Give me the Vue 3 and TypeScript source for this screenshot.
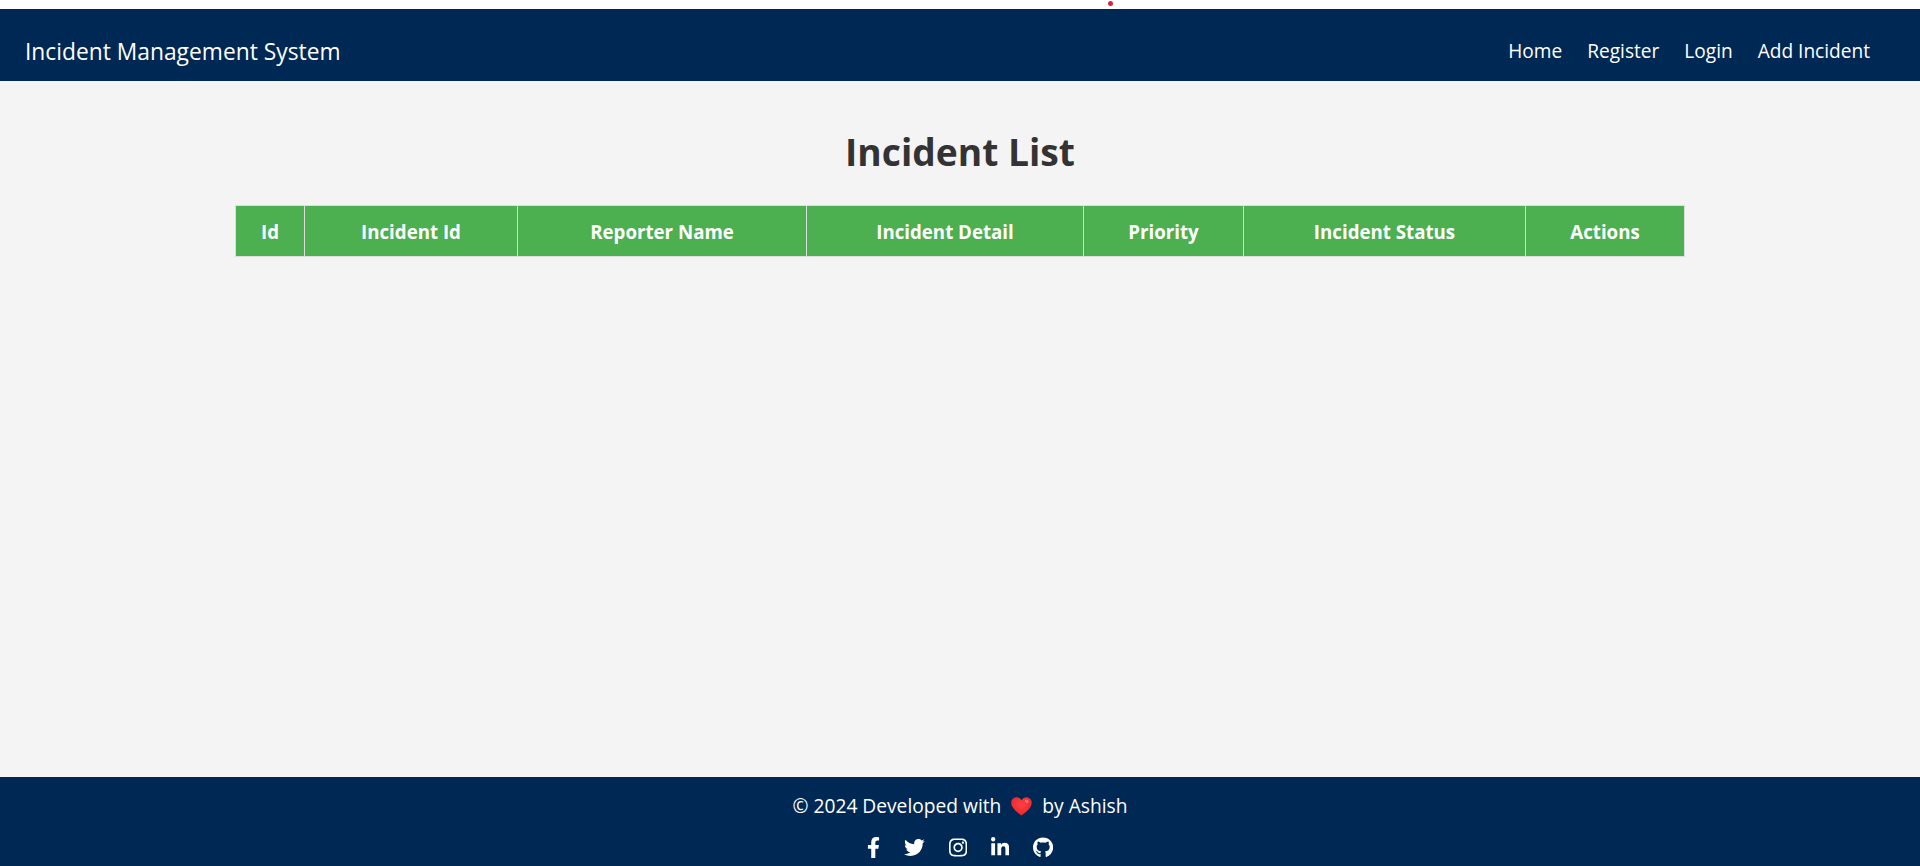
<script setup lang="ts">
const links: string[] = ['Home', 'Register', 'Login', 'Add Incident']
const columns: { label: string; width: number }[] = [
  { label: 'Id', width: 69 },
  { label: 'Incident Id', width: 213 },
  { label: 'Reporter Name', width: 289 },
  { label: 'Incident Detail', width: 277 },
  { label: 'Priority', width: 160 },
  { label: 'Incident Status', width: 282 },
  { label: 'Actions', width: 159 },
]
const socials: { name: string; box: string; w: number; d: string }[] = [
  { name: 'Facebook', box: '0 0 320 512', w: 13, d: 'M279.14 288l14.22-92.66h-88.91v-60.13c0-25.35 12.42-50.06 52.24-50.06h40.42V6.26S260.43 0 225.36 0c-73.22 0-121.08 44.38-121.08 124.72v70.62H22.89V288h81.39v224h100.17V288z' },
  { name: 'Twitter', box: '0 0 512 512', w: 20.8, d: 'M459.37 151.716c.325 4.548.325 9.097.325 13.645 0 138.72-105.583 298.558-298.558 298.558-59.452 0-114.68-17.219-161.137-47.106 8.447.974 16.568 1.299 25.34 1.299 49.055 0 94.213-16.568 130.274-44.832-46.132-.975-84.792-31.188-98.112-72.772 6.498.974 12.995 1.624 19.818 1.624 9.421 0 18.843-1.3 27.614-3.573-48.081-9.747-84.143-51.98-84.143-102.985v-1.299c13.969 7.797 30.214 12.67 47.431 13.319-28.264-18.843-46.781-51.005-46.781-87.391 0-19.492 5.197-37.36 14.294-52.954 51.655 63.675 129.3 105.258 216.365 109.807-1.624-7.797-2.599-15.918-2.599-24.04 0-57.828 46.782-104.934 104.934-104.934 30.213 0 57.502 12.67 76.67 33.137 23.715-4.548 46.456-13.32 66.599-25.34-7.798 24.366-24.366 44.833-46.132 57.827 21.117-2.273 41.584-8.122 60.426-16.243-14.292 20.791-32.161 39.308-52.628 54.253z' },
  { name: 'Instagram', box: '0 0 448 512', w: 18.2, d: 'M224.1 141c-63.6 0-114.9 51.3-114.9 114.9s51.3 114.9 114.9 114.9S339 319.5 339 255.9 287.7 141 224.1 141zm0 189.6c-41.1 0-74.7-33.5-74.7-74.7s33.5-74.7 74.7-74.7 74.7 33.5 74.7 74.7-33.6 74.7-74.7 74.7zm146.4-194.3c0 14.9-12 26.8-26.8 26.8-14.9 0-26.8-12-26.8-26.8s12-26.8 26.8-26.8 26.8 12 26.8 26.8zm76.1 27.2c-1.7-35.9-9.9-67.7-36.2-93.9-26.2-26.2-58-34.4-93.9-36.2-37-2.1-147.9-2.1-184.9 0-35.8 1.7-67.6 9.9-93.9 36.1s-34.4 58-36.2 93.9c-2.1 37-2.1 147.9 0 184.9 1.7 35.9 9.9 67.7 36.2 93.9s58 34.4 93.9 36.2c37 2.1 147.9 2.1 184.9 0 35.9-1.7 67.7-9.9 93.9-36.2 26.2-26.2 34.4-58 36.2-93.9 2.1-37 2.1-147.8 0-184.8zM398.8 388c-7.8 19.6-22.9 34.7-42.6 42.6-29.5 11.7-99.5 9-132.1 9s-102.7 2.6-132.1-9c-19.6-7.8-34.7-22.9-42.6-42.6-11.7-29.5-9-99.5-9-132.1s-2.6-102.7 9-132.1c7.8-19.6 22.9-34.7 42.6-42.6 29.5-11.7 99.5-9 132.1-9s102.7-2.6 132.1 9c19.6 7.8 34.7 22.9 42.6 42.6 11.7 29.5 9 99.5 9 132.1s2.7 102.7-9 132.1z' },
  { name: 'LinkedIn', box: '0 0 448 512', w: 18.2, d: 'M100.28 448H7.4V148.9h92.88zM53.79 108.1C24.09 108.1 0 83.5 0 53.8a53.79 53.79 0 0 1 107.58 0c0 29.7-24.1 54.3-53.79 54.3zM447.9 448h-92.68V302.4c0-34.7-.7-79.2-48.29-79.2-48.29 0-55.69 37.7-55.69 76.7V448h-92.78V148.9h89.08v40.8h1.3c12.4-23.5 42.69-48.3 87.88-48.3 94 0 111.28 61.9 111.28 142.3V448z' },
  { name: 'GitHub', box: '0 0 496 512', w: 20.2, d: 'M165.9 397.4c0 2-2.3 3.6-5.2 3.6-3.3 0-5.6-1.6-5.6-3.6 0-2 2.3-3.6 5.2-3.6 3-.3 5.6 1.3 5.6 3.6zm-31.1-4.5c-.7 2 1.3 4.3 4.3 4.9 2.6 1 5.6 0 6.2-2s-1.3-4.3-4.3-5.2c-2.6-.7-5.5.3-6.2 2.3zm44.2-1.7c-2.9.7-4.9 2.6-4.6 4.9.3 2 2.9 3.3 5.9 2.6 2.9-.7 4.9-2.6 4.6-4.6-.3-1.9-3-3.2-5.9-2.9zM244.8 8C106.1 8 0 113.3 0 252c0 110.9 69.8 205.8 169.5 239.2 12.8 2.3 17.3-5.6 17.3-12.1 0-6.2-.3-40.4-.3-61.4 0 0-70 15-84.7-29.8 0 0-11.4-29.1-27.8-36.6 0 0-22.9-15.7 1.6-15.4 0 0 24.9 2 38.6 25.8 21.9 38.6 58.6 27.5 72.9 20.9 2.3-16 8.8-27.1 16-33.7-55.9-6.2-112.3-14.3-112.3-110.5 0-27.5 7.6-41.3 23.6-58.9-2.6-6.5-11.1-33.3 2.6-67.9 20.9-6.5 69 27 69 27 20-5.6 41.5-8.5 62.8-8.5s42.8 2.9 62.8 8.5c0 0 48.1-33.6 69-27 13.7 34.7 5.2 61.4 2.6 67.9 16 17.7 25.8 31.5 25.8 58.9 0 96.5-58.9 104.2-114.8 110.5 9.2 7.9 17 22.9 17 46.4 0 33.7-.3 75.4-.3 83.6 0 6.5 4.6 14.4 17.3 12.1C428.2 457.8 496 362.9 496 252 496 113.3 383.5 8 244.8 8zM97.2 352.9c-1.3 1-1 3.3.7 5.2 1.6 1.6 3.9 2.3 5.2 1 1.3-1 1-3.3-.7-5.2-1.6-1.6-3.9-2.3-5.2-1zm-10.8-8.1c-.7 1.3.3 2.9 2.3 3.9 1.6 1 3.6.7 4.3-.7.7-1.3-.3-2.9-2.3-3.9-2-.6-3.6-.3-4.3.7zm32.4 35.6c-1.6 1.3-1 4.3 1.3 6.2 2.3 2.3 5.2 2.6 6.5 1 1.3-1.3.7-4.3-1.3-6.2-2.2-2.3-5.2-2.6-6.5-1zm-11.4-14.7c-1.6 1-1.6 3.6 0 5.9 1.6 2.3 4.3 3.3 5.6 2.3 1.6-1.3 1.6-3.9 0-6.2-1.4-2.3-4-3.3-5.6-2z' },
]
</script>

<template>
  <div class="page">
    <span class="cursor-dot"></span>
    <header class="navbar">
      <a class="brand" href="#">Incident Management System</a>
      <nav class="links">
        <a v-for="link in links" :key="link" href="#">{{ link }}</a>
      </nav>
    </header>
    <main class="content">
      <h1>Incident List</h1>
      <table>
        <colgroup>
          <col v-for="c in columns" :key="c.label" :style="{ width: c.width + 'px' }" />
        </colgroup>
        <thead>
          <tr>
            <th v-for="c in columns" :key="c.label">{{ c.label }}</th>
          </tr>
        </thead>
      </table>
    </main>
    <footer class="footer">
      <p class="credit">
        <span>© 2024 Developed with</span>
        <svg class="heart" viewBox="0 0 20 18" aria-label="love">
          <defs>
            <radialGradient id="heartFill" cx="50%" cy="40%" r="70%">
              <stop offset="0%" stop-color="#ff4242" />
              <stop offset="100%" stop-color="#e5202a" />
            </radialGradient>
          </defs>
          <path d="M10 17.6C7.4 15.7 0.2 10.9 0.2 5.5 0.2 2.4 2.6 0.2 5.3 0.2 7.3 0.2 9 1.3 10 3.1 11 1.3 12.7 0.2 14.7 0.2 17.4 0.2 19.8 2.4 19.8 5.5 19.8 10.9 12.6 15.7 10 17.6Z" fill="url(#heartFill)" />
          <ellipse cx="15" cy="4" rx="2" ry="1.4" fill="#ff8a8a" opacity="0.7" transform="rotate(35 15 4)" />
        </svg>
        <span>by Ashish</span>
      </p>
      <div class="socials">
        <a v-for="s in socials" :key="s.name" href="#" :aria-label="s.name">
          <svg :viewBox="s.box" :style="{ width: s.w + 'px' }"><path :d="s.d" fill="#fff" /></svg>
        </a>
      </div>
    </footer>
  </div>
</template>

<style>
html, body { margin: 0; background: #fff; }
</style>

<style scoped>
.page {
  position: relative;
  height: 866px;
  padding-top: 9px;
  box-sizing: border-box;
  display: flex;
  flex-direction: column;
  overflow: hidden;
  font-family: "Open Sans", "Noto Sans", sans-serif;
  background: #fff;
}
.cursor-dot {
  position: absolute;
  left: 1108px;
  top: 1px;
  width: 5px;
  height: 5px;
  border-radius: 50%;
  background: #d6263a;
}
.navbar {
  height: 72px;
  flex: none;
  background: #002855;
  display: flex;
  align-items: center;
  justify-content: space-between;
  padding: 13px 50px 0 25px;
  box-sizing: border-box;
}
.brand {
  color: #fff;
  text-decoration: none;
  font-size: 22.8px;
  line-height: 30px;
}
.links { display: flex; gap: 25px; margin-bottom: 2px; }
.links a {
  color: #fff;
  text-decoration: none;
  font-size: 19.1px;
  line-height: 26px;
}
.content {
  flex: 1;
  background: #f4f4f4;
  display: flex;
  flex-direction: column;
  align-items: center;
}
h1 {
  margin: 45px 0 27px;
  font-size: 37.2px;
  line-height: 52px;
  font-weight: 700;
  color: #333;
}
table {
  width: 1449px;
  table-layout: fixed;
  border-collapse: collapse;
}
th {
  height: 50px;
  padding: 0;
  background: #4caf50;
  color: #fff;
  font-size: 18.7px;
  font-weight: 700;
  text-align: center;
  border: 1px solid #ddd;
}
.footer {
  height: 89px;
  flex: none;
  background: #002855;
  color: #fff;
  display: flex;
  flex-direction: column;
  align-items: center;
  box-sizing: border-box;
  padding-top: 16px;
}
.credit {
  margin: 0;
  display: flex;
  align-items: center;
  gap: 10px;
  font-size: 19.2px;
  line-height: 26px;
}
.heart { width: 21px; height: 19px; }
.socials {
  margin-top: 18px;
  display: flex;
  gap: 24px;
}
.socials a { display: flex; }
.socials svg { height: 21px; display: block; }
</style>
